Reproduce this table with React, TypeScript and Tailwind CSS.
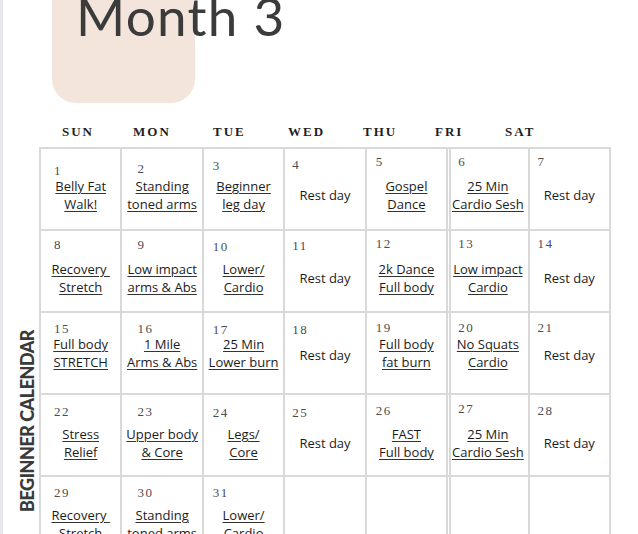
type Day = { n: number; label: string[]; pt: string; rest?: boolean; top?: string };

// left padding of the day number, per column
const COL_PL = ["pl-[13px]", "pl-[15px]", "pl-[9px]", "pl-[7px]", "pl-[9px]", "pl-[10px]", "pl-[8px]"];

const REST = ["Rest day"];

const ROWS: { top: string; days: (Day | null)[] }[] = [
  {
    top: "h-[29px]",
    days: [
      { n: 1, label: ["Belly Fat", "Walk!"], pt: "pt-[15px]" },
      { n: 2, label: ["Standing", "toned arms"], pt: "pt-[13px]" },
      { n: 3, label: ["Beginner", "leg day"], pt: "pt-[10px]" },
      { n: 4, label: REST, pt: "pt-[9px]", rest: true },
      { n: 5, label: ["Gospel", "Dance"], pt: "pt-[6px]" },
      { n: 6, label: ["25 Min", "Cardio Sesh"], pt: "pt-[6px]" },
      { n: 7, label: REST, pt: "pt-[6px]", rest: true },
    ],
  },
  {
    top: "h-[30px]",
    days: [
      { n: 8, label: ["Recovery\u00a0", "Stretch"], pt: "pt-[7px]" },
      { n: 9, label: ["Low impact", "arms & Abs"], pt: "pt-[7px]" },
      { n: 10, label: ["Lower/", "Cardio"], pt: "pt-[9px]" },
      { n: 11, label: REST, pt: "pt-[8px]", rest: true },
      { n: 12, label: ["2k Dance", "Full body"], pt: "pt-[6px]" },
      { n: 13, label: ["Low impact", "Cardio"], pt: "pt-[6px]" },
      { n: 14, label: REST, pt: "pt-[6px]", rest: true },
    ],
  },
  {
    top: "h-[23px]",
    days: [
      { n: 15, label: ["Full body", "STRETCH"], pt: "pt-[9px]" },
      { n: 16, label: ["1 Mile", "Arms & Abs"], pt: "pt-[9px]" },
      { n: 17, label: ["25 Min", "Lower burn"], pt: "pt-[10px]" },
      { n: 18, label: REST, pt: "pt-[10px]", rest: true, top: "h-[25px]" },
      { n: 19, label: ["Full body", "fat burn"], pt: "pt-[8px]" },
      { n: 20, label: ["No Squats", "Cardio"], pt: "pt-[8px]" },
      { n: 21, label: REST, pt: "pt-[8px]", rest: true, top: "h-[25px]" },
    ],
  },
  {
    top: "h-[31px]",
    days: [
      { n: 22, label: ["Stress", "Relief"], pt: "pt-[10px]" },
      { n: 23, label: ["Upper body", "& Core"], pt: "pt-[10px]" },
      { n: 24, label: ["Legs/", "Core"], pt: "pt-[11px]" },
      { n: 25, label: REST, pt: "pt-[11px]", rest: true },
      { n: 26, label: ["FAST", "Full body"], pt: "pt-[9px]" },
      { n: 27, label: ["25 Min", "Cardio Sesh"], pt: "pt-[7px]" },
      { n: 28, label: REST, pt: "pt-[9px]", rest: true },
    ],
  },
  {
    top: "h-[30px]",
    days: [
      { n: 29, label: ["Recovery\u00a0", "Stretch"], pt: "pt-[9px]" },
      { n: 30, label: ["Standing", "toned arms"], pt: "pt-[9px]" },
      { n: 31, label: ["Lower/", "Cardio"], pt: "pt-[9px]" },
      null,
      null,
      null,
      null,
    ],
  },
];

const WEEKDAYS = [
  { d: "SUN", w: "w-[71px]" },
  { d: "MON", w: "w-[80px]" },
  { d: "TUE", w: "w-[75px]" },
  { d: "WED", w: "w-[75px]" },
  { d: "THU", w: "w-[72px]" },
  { d: "FRI", w: "w-[70px]" },
  { d: "SAT", w: "w-[60px]" },
];

export default function App() {
  const renderCell = (day: Day | null, col: number, rowTop: string, key: string) => {
    // the FRI/SAT split has a doubled line in the original
    const sat = col === 5 ? "shadow-[inset_1px_0_0_white,inset_3px_0_0_#d9d9d9]" : "";

    return (
      <div key={key} className={`h-[82px] border-r-2 border-b-2 border-[#d9d9d9] flex flex-col ${sat}`}>
        {day && (
          <>
            <div className={`shrink-0 ${day.top ?? rowTop} ${day.pt} ${COL_PL[col]}`}>
              <span className="block text-[13px] leading-[13px] tracking-[1.5px] text-[#4d4d4d] font-['Liberation_Serif',serif]">
                {day.n}
              </span>
            </div>
            <div className="shrink-0 h-[35px] flex flex-col items-center justify-center text-[13px] leading-[17.5px] text-[#1c1c1c] font-['Open_Sans',sans-serif] whitespace-nowrap">
              {day.label.map((l) => (
                <span
                  key={l}
                  className={day.rest ? "" : "underline decoration-1 underline-offset-[2px] decoration-[#333]"}
                >
                  {l}
                </span>
              ))}
            </div>
          </>
        )}
      </div>
    );
  };

  return (
    <div className="h-[534px] w-[638px] overflow-hidden bg-white flex">
      {/* edge strip */}
      <div className="shrink-0 w-[3px] h-full bg-[#e7e8ec]" />

      {/* side title */}
      <div className="shrink-0 w-[36px] pt-[330px] pl-[14px]">
        <div className="[writing-mode:vertical-rl] rotate-180 text-[18px] leading-[20px] font-black tracking-[-0.5px] text-[#3a3a3a] font-['Lato',sans-serif] whitespace-nowrap">
          BEGINNER CALENDAR
        </div>
      </div>

      <div className="flex-1 flex flex-col">
        {/* header */}
        <div className="shrink-0 relative h-[125px]">
          <div className="ml-[13px] w-[143px] h-[103px] rounded-b-[24px] bg-[#f3e5db]" />
          <h1 className="absolute left-[37px] top-[-11px] text-[53px] leading-none font-normal tracking-[1.3px] text-[#3b3b3b] font-['Lato',sans-serif] whitespace-nowrap">
            Month 3
          </h1>
        </div>

        {/* weekdays */}
        <div className="shrink-0 h-[22px] flex pl-[23px] text-[13px] leading-[14px] font-bold tracking-[2px] text-[#1f1f1f] font-['Liberation_Serif',serif]">
          {WEEKDAYS.map((w) => (
            <span key={w.d} className={w.w}>
              {w.d}
            </span>
          ))}
        </div>

        {/* calendar grid */}
        <div className="shrink-0 w-[572px] grid grid-cols-7 border-l-2 border-t-2 border-[#d9d9d9]">
          {ROWS.map((row, r) => row.days.map((d, c) => renderCell(d, c, row.top, `${r}-${c}`)))}
        </div>
      </div>
    </div>
  );
}
